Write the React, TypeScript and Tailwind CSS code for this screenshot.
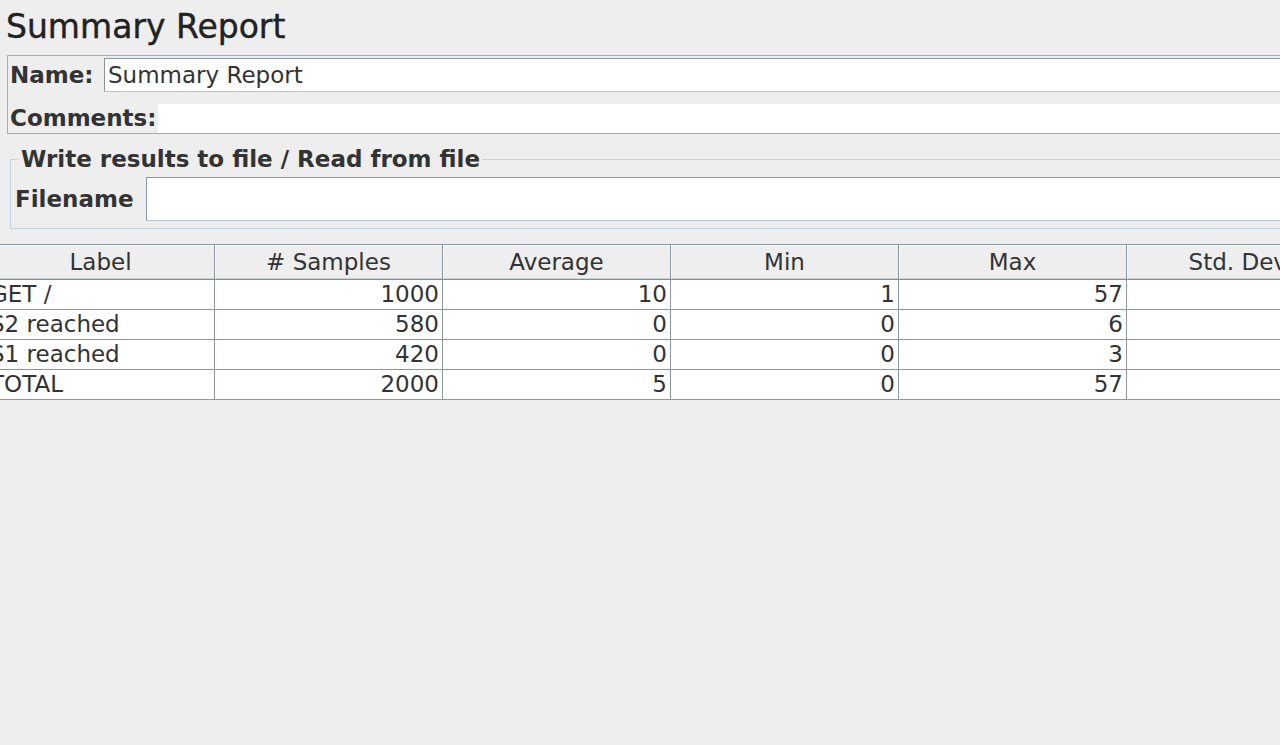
const columns = ['Label', '# Samples', 'Average', 'Min', 'Max', 'Std. Dev.']

const rows: [string, string, string, string, string][] = [
  ['GET /', '1000', '10', '1', '57'],
  ['S2 reached', '580', '0', '0', '6'],
  ['S1 reached', '420', '0', '0', '3'],
  ['TOTAL', '2000', '5', '0', '57'],
]

function TextBox({ value, className }: { value?: string; className: string }) {
  return (
    <div
      className={`flex flex-1 items-center border border-[#8a97a4] border-b-[#b8c4d0] border-r-[#b8c4d0] bg-white pl-[3px] ${className}`}
    >
      {value}
    </div>
  )
}

export default function App() {
  return (
    <div className="h-[745px] w-[1280px] overflow-hidden bg-[#eeeeee] font-['DejaVu_Sans','Liberation_Sans',sans-serif] text-[#333333]">
      <h1 className="pl-[6px] pt-[8px] text-[33px] leading-[38px] text-[#222222] [-webkit-text-stroke:0.4px_#222222]">
        Summary Report
      </h1>

      <div className="ml-[7px] mt-[9px] w-[1400px] border border-[#a9a9a9] pl-[2px] pt-[2px]">
        <div className="flex items-center">
          <span className="w-[94px] text-[23px] font-bold leading-[27px]">Name:</span>
          <TextBox value="Summary Report" className="h-[34px] text-[23px]" />
        </div>
        <div className="mt-[12px] flex items-center">
          <span className="w-[148px] text-[23px] font-bold leading-[27px]">Comments:</span>
          <div className="h-[29px] flex-1 bg-white" />
        </div>
      </div>

      <fieldset className="ml-[10px] mt-[12px] w-[1400px] border border-[#c2d3e3] pb-[7px] pl-[4px]">
        <legend className="ml-[4px] px-[2px] text-[23px] font-bold leading-[27px]">
          Write results to file / Read from file
        </legend>
        <div className="mt-[4px] flex items-center">
          <span className="w-[131px] text-[23px] font-bold leading-[27px]">Filename</span>
          <TextBox className="h-[44px]" />
        </div>
      </fieldset>

      <div className="ml-[-13px] mt-[15px] w-[1400px]">
        <div className="grid grid-cols-[repeat(6,228px)] border-y border-[#8a97a4] border-b-[#7f8c99] text-[23px] leading-[34px] text-[#333333]">
          {columns.map((c) => (
            <div key={c} className="border-r border-[#8a97a4] bg-[#eeeeee] text-center shadow-[inset_1px_1px_0_#fafafa,inset_0_-1px_0_#c8d0d8]">
              {c}
            </div>
          ))}
        </div>
        {rows.map((r) => (
          <div
            key={r[0]}
            className="grid grid-cols-[repeat(6,228px)] border-b border-[#8a97a4] bg-white text-[23px] leading-[29px]"
          >
            <div className="border-r border-[#8a97a4] pl-[3px]">{r[0]}</div>
            {r.slice(1).map((v, i) => (
              <div key={i} className="border-r border-[#8a97a4] pr-[3px] text-right">
                {v}
              </div>
            ))}
            <div className="border-r border-[#8a97a4]" />
          </div>
        ))}
      </div>
    </div>
  )
}
